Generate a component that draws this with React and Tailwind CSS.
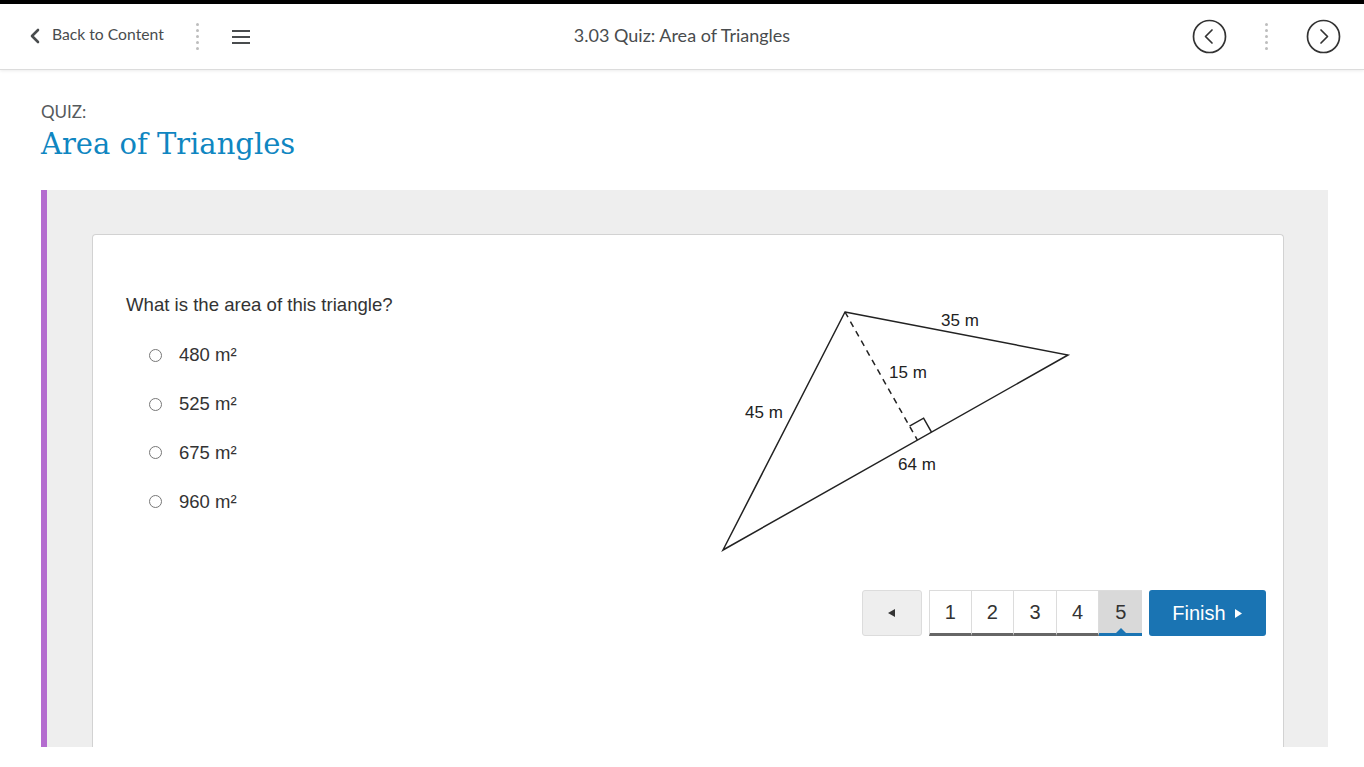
import React from "react";

const options = ["480 m²", "525 m²", "675 m²", "960 m²"];

function DotSeparator() {
  return (
    <div className="flex flex-col gap-[3px]">
      {[0, 1, 2, 3, 4].map((i) => (
        <span key={i} className="block w-[3px] h-[3px] rounded-full bg-[#bdbdbd]" />
      ))}
    </div>
  );
}

function CircleChevron({ dir }) {
  return (
    <svg width="35" height="35" viewBox="0 0 35 35" fill="none" stroke="#333" strokeWidth="1.7">
      <circle cx="17.5" cy="17.5" r="16" />
      {dir === "left" ? (
        <path d="M20 11 L13.5 17.5 L20 24" strokeLinecap="round" strokeLinejoin="round" />
      ) : (
        <path d="M15 11 L21.5 17.5 L15 24" strokeLinecap="round" strokeLinejoin="round" />
      )}
    </svg>
  );
}

function Triangle() {
  return (
    <svg width="365" height="260" viewBox="0 0 365 260" className="mt-[7px] shrink-0">
      <g stroke="#222" strokeWidth="1.5" fill="none">
        <polygon points="130,11 353,54 8,249" />
        <line x1="130" y1="11" x2="202.4" y2="139.1" strokeDasharray="6 5" />
        <polyline points="194.5,125.2 208.6,117.2 216.5,131.2" />
      </g>
      <g fill="#222" fontFamily="'Liberation Sans', Arial, sans-serif" fontSize="17" textAnchor="middle">
        <text x="245" y="25">35 m</text>
        <text x="193" y="77">15 m</text>
        <text x="49" y="117">45 m</text>
        <text x="202" y="169">64 m</text>
      </g>
    </svg>
  );
}

export default function App() {
  return (
    <div className="min-h-[767px] bg-white font-['Lato',sans-serif]">
      {/* Top bar */}
      <div className="h-[4px] bg-black" />
      <header className="relative h-[66px] flex items-center justify-between border-b border-[#dcdcdc] shadow-[0_1px_3px_rgba(0,0,0,0.08)] pl-[28px] pr-[23px]">
        <div className="flex items-center -mt-[3px]">
          <button className="flex items-center text-[15.7px] text-[#494c4e]">
            <svg width="14" height="16" viewBox="0 0 14 16" className="mr-[10px] mt-[2px]">
              <path d="M10 2 L4 8 L10 14" stroke="#494c4e" strokeWidth="2.6" fill="none" strokeLinecap="round" strokeLinejoin="round" />
            </svg>
            Back to Content
          </button>
          <div className="ml-[32px] mt-[3px]">
            <DotSeparator />
          </div>
          <svg width="20" height="16" viewBox="0 0 20 16" className="ml-[32px] mt-[3px]">
            <g stroke="#494c4e" strokeWidth="2">
              <line x1="1" y1="2" x2="19" y2="2" />
              <line x1="1" y1="8" x2="19" y2="8" />
              <line x1="1" y1="14" x2="19" y2="14" />
            </g>
          </svg>
        </div>
        <div className="absolute left-1/2 -translate-x-1/2 -mt-[3px] text-[18px] text-[#494c4e]">
          3.03 Quiz: Area of Triangles
        </div>
        <div className="flex items-center gap-[38px]">
          <CircleChevron dir="left" />
          <DotSeparator />
          <CircleChevron dir="right" />
        </div>
      </header>

      <main className="pl-[41px] pr-[36px]">
        <div className="pt-[31px] text-[17px] text-[#565a5c] leading-[22px]">QUIZ:</div>
        <h1 className="text-[29px] leading-[42px] text-[#0f86c1] font-['DejaVu_Serif',serif]">
          Area of Triangles
        </h1>

        <div className="mt-[25px] h-[557px] bg-[#eeeeee] border-l-[6px] border-[#b46ccf] pt-[44px] pl-[45px] pr-[44px]">
          <div className="h-[513px] bg-white border-t border-x border-[#d2d2d2] rounded-t-[4px] pt-[59px] font-['Liberation_Sans',Arial,sans-serif] text-[#333]">
            <div className="flex">
              <div className="w-[622px] pl-[33px] shrink-0">
                <p className="text-[18.6px] leading-[22px]">What is the area of this triangle?</p>
                <div className="mt-[15px]">
                  {options.map((o) => (
                    <label key={o} className="flex items-center h-[48.7px] pl-[23px] text-[18.5px]">
                      <span className="w-[13px] h-[13px] rounded-full border border-[#777] bg-white" />
                      <span className="ml-[17px]">{o}</span>
                    </label>
                  ))}
                </div>
              </div>
              <Triangle />
            </div>

            <div className="flex justify-end items-start mt-[29px] pr-[17px] gap-[7px]">
              <button className="w-[60px] h-[46px] bg-[#eeeeee] border border-[#dcdcdc] rounded-[3px] flex items-center justify-center">
                <svg width="8" height="8" viewBox="0 0 8 8">
                  <path d="M7 0 L0 4 L7 8 Z" fill="#333" />
                </svg>
              </button>
              <div className="flex h-[46px] border-t border-[#dcdcdc]">
                {[1, 2, 3, 4, 5].map((n) => (
                  <div
                    key={n}
                    className={`relative w-[42.6px] flex items-center justify-center text-[20px] border-b-[3px] ${
                      n === 5
                        ? "bg-[#d9d9d9] border-[#1a74b3]"
                        : "bg-white border-b-[#666] border-r border-r-[#dcdcdc]"
                    } ${n === 1 ? "border-l border-l-[#dcdcdc]" : ""}`}
                  >
                    {n}
                    {n === 5 && (
                      <span className="absolute bottom-0 left-1/2 -translate-x-1/2 w-0 h-0 border-l-[5px] border-r-[5px] border-b-[5px] border-l-transparent border-r-transparent border-b-[#1a74b3]" />
                    )}
                  </div>
                ))}
              </div>
              <button className="w-[117px] h-[46px] bg-[#1a74b3] rounded-[3px] text-white text-[20px] flex items-center justify-center">
                Finish
                <svg width="8" height="9" viewBox="0 0 8 9" className="ml-[9px]">
                  <path d="M0 0 L7 4.5 L0 9 Z" fill="#fff" />
                </svg>
              </button>
            </div>
          </div>
        </div>
      </main>
    </div>
  );
}
